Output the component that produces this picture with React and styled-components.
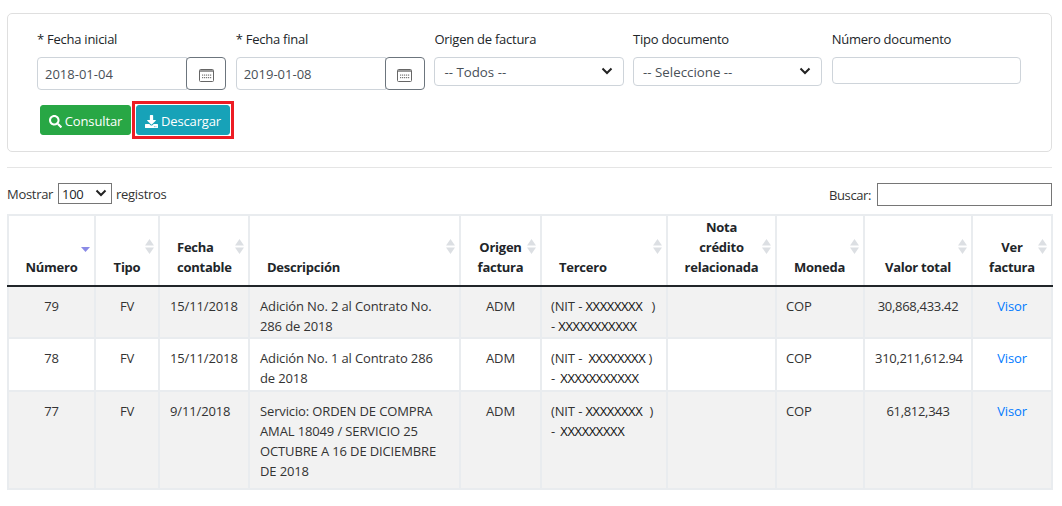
import React from "react";
import styled, { createGlobalStyle } from "styled-components";
import { FaSearch, FaDownload } from "react-icons/fa";

const Global = createGlobalStyle`
  html, body { margin: 0; background: #fff; }
  body { font-family: "Open Sans", "Noto Sans", sans-serif; font-size: 13px; line-height: 20px; color: #212529; letter-spacing: -0.13px; }
`;
const Page = styled.div`
  width: 1045px;
  padding: 13px 0 0 7px;
`;
const Card = styled.div`
  border: 1px solid #dfdfdf;
  border-radius: 5px;
  padding: 15px 0 12px 29px;
  height: 139px;
  box-sizing: border-box;
`;
const FilterGrid = styled.div`
  display: grid;
  grid-template-columns: repeat(5, 198.7px);
  height: 61px;
`;
const Field = styled.div`
  display: flex;
  flex-direction: column;
  align-items: flex-start;
`;
const Label = styled.label`
  height: 20px;
  margin-bottom: 8px;
  color: #212529;
  letter-spacing: -0.25px;
`;
const InputGroup = styled.div`
  display: flex;
`;
const DateInput = styled.input`
  width: 150px;
  height: 33px;
  box-sizing: border-box;
  border: 1px solid #ced4da;
  border-radius: 4px 0 0 4px;
  padding: 0 7px;
  font: inherit;
  color: #495057;
  outline: none;
`;
const CalButton = styled.button`
  width: 40px;
  height: 33px;
  box-sizing: border-box;
  margin-left: -1px;
  background: #fff;
  border: 1px solid #6c757d;
  border-radius: 4px;
  padding: 3px 0 0;
  display: flex;
  align-items: center;
  justify-content: center;
`;
const SelectWrap = styled.div`
  position: relative;
  width: ${p => p.$w}px;
  height: 29px;
`;
const Select = styled.select`
  appearance: none;
  width: 100%;
  height: 100%;
  box-sizing: border-box;
  border: 1px solid #ced4da;
  border-radius: 4px;
  background: #fff;
  padding: 0 9px;
  font: inherit;
  font-size: 13.3px;
  color: #495057;
  outline: none;
`;
const Chevron = styled.svg`
  position: absolute;
  right: 11px;
  top: 10px;
  width: 12px;
  height: 8px;
  pointer-events: none;
`;
const NumberInput = styled.input`
  width: 189px;
  height: 27px;
  box-sizing: border-box;
  border: 1px solid #ced4da;
  border-radius: 4px;
  outline: none;
`;
const Actions = styled.div`
  display: flex;
  align-items: center;
  margin-top: 11px;
  margin-left: 3px;
`;
const Btn = styled.button`
  width: ${p => p.$w}px;
  height: 30px;
  box-sizing: border-box;
  border: 1px solid ${p => p.$bg};
  background: ${p => p.$bg};
  color: #fff;
  border-radius: 3px;
  padding: 2px 0 0;
  font: inherit;
  letter-spacing: -0.13px;
  display: inline-flex;
  align-items: center;
  justify-content: center;
  gap: 3px;
  white-space: nowrap;
`;
const Highlight = styled.div`
  border: 3px solid #ed1c24;
  padding: 1px;
  margin-left: 1px;
  display: flex;
`;
const Rule = styled.hr`
  border: 0;
  border-top: 1px solid #e5e5e5;
  margin: 15px 0 0;
`;
const Controls = styled.div`
  display: flex;
  justify-content: space-between;
  align-items: flex-start;
  height: 31px;
  margin-top: 15px;
`;
const LengthBox = styled.div`
  display: flex;
  align-items: center;
  height: 21px;
  gap: 4px;
  color: #333;
  white-space: nowrap;
  letter-spacing: -0.3px;
`;
const LengthSelectWrap = styled.div`
  position: relative;
  width: 54px;
  height: 21px;
  margin-left: 1px;
`;
const LengthSelect = styled.select`
  appearance: none;
  width: 100%;
  height: 100%;
  box-sizing: border-box;
  border: 1px solid #767676;
  border-radius: 0;
  background: #fff;
  padding: 0 3px;
  font: inherit;
  letter-spacing: -0.3px;
  color: #212529;
`;
const LengthChevron = styled(Chevron)`
  right: 5px;
  top: 6px;
`;
const SearchBox = styled.div`
  display: flex;
  align-items: center;
  gap: 6px;
  color: #333;
  letter-spacing: -0.4px;
`;
const SearchInput = styled.input`
  width: 175px;
  height: 23px;
  box-sizing: border-box;
  border: 1px solid #767676;
  outline: none;
`;
const Table = styled.table`
  table-layout: fixed;
  width: 1044px;
  border-collapse: collapse;
  border: 2px solid #e9ecef;
`;
const Th = styled.th`
  position: relative;
  border: 2px solid #e9ecef;
  border-bottom: 2px solid #212529;
  padding: 0 12px 8px ${p => (p.$center ? "12px" : "17px")};
  height: 61px;
  vertical-align: bottom;
  text-align: ${p => (p.$center ? "center" : "left")};
  font-weight: 700;
  line-height: 20px;
  letter-spacing: -0.25px;
  color: #212529;
`;
const SortIcon = styled.svg`
  position: absolute;
  right: 4px;
  top: 23px;
  width: 9px;
  height: 15px;
`;
const Row = styled.tr`
  background: ${p => (p.$odd ? "#f2f2f2" : "#fff")};
`;
const Td = styled.td`
  border: 2px solid #e9ecef;
  padding: 9px 10px ${p => p.$pb}px ${p => p.$pl || 10}px;
  vertical-align: top;
  text-align: ${p => (p.$center ? "center" : "left")};
  line-height: 20px;
  color: #333;
  letter-spacing: ${p => p.$tight ? "-0.3px" : "inherit"};
`;
const NitLine = styled.div`
  white-space: nowrap;
`;
const Masked = styled.span`
  color: #111;
  letter-spacing: -0.4px;
  margin: ${p => p.$m || "0"};
`;
const Link = styled.a`
  color: #007bff;
  text-decoration: none;
`;

const CalendarIcon = () => (
  <svg width="15" height="13" viewBox="0 0 15 13">
    <rect x="0.5" y="0.5" width="14" height="12" rx="1" fill="#fff" stroke="#666" />
    <rect x="1" y="1" width="13" height="2" fill="#999" />
    {[3, 5, 7, 9, 11].map(x => (
      <g key={x} fill="#777">
        <rect x={x} y="5.5" width="1.2" height="1.2" />
        <rect x={x} y="8" width="1.2" height="1.2" />
      </g>
    ))}
  </svg>
);
const ChevronIcon = ({ as: C = Chevron }) => (
  <C viewBox="0 0 12 8">
    <path d="M1.5 1.5 L6 6 L10.5 1.5" fill="none" stroke="#222" strokeWidth="2" />
  </C>
);
const Sort = ({ active }) => (
  <SortIcon viewBox="0 0 9 15">
    {!active && <path d="M4.5 0 L9 6.5 H0 Z" fill="#dcdfe3" />}
    <path d={active ? "M0 8 H9 L4.5 13 Z" : "M0 8.5 H9 L4.5 15 Z"} fill={active ? "#8a8ae6" : "#dcdfe3"} />
  </SortIcon>
);

const headers = [
  { w: 87, t: <>Número</>, c: true, active: true },
  { w: 64, t: <>Tipo</>, c: true },
  { w: 90, t: <>Fecha<br />contable</> },
  { w: 211, t: <>Descripción</> },
  { w: 81, t: <>Origen<br />factura</>, c: true },
  { w: 126, t: <>Tercero</> },
  { w: 109, t: <>Nota<br />crédito<br />relacionada</>, c: true },
  { w: 88, t: <>Moneda</> },
  { w: 108, t: <>Valor total</>, c: true },
  { w: 80, t: <>Ver<br />factura</>, c: true },
];

const rows = [
  { n: "79", f: "15/11/2018", d: "Adición No. 2 al Contrato No. 286 de 2018", m1: "XXXXXXXX", g1: "0 6px 0 0", g2: "0", m2: "XXXXXXXXXXX", v: "30,868,433.42", pb: 1 },
  { n: "78", f: "15/11/2018", d: "Adición No. 1 al Contrato 286 de 2018", m1: "XXXXXXXX", g1: "0 0 0 3px", g2: "0 0 0 2px", m2: "XXXXXXXXXXX", v: "310,211,612.94", pb: 2 },
  { n: "77", f: "9/11/2018", d: "Servicio: ORDEN DE COMPRA AMAL 18049 / SERVICIO 25 OCTUBRE A 16 DE DICIEMBRE DE 2018", m1: "XXXXXXXX", g1: "0 4px 0 0", g2: "0 0 0 2px", m2: "XXXXXXXXX", v: "61,812,343", pb: 7 },
];

export default function App() {
  return (
    <Page>
      <Global />
      <Card>
        <FilterGrid>
          <Field>
            <Label>* Fecha inicial</Label>
            <InputGroup>
              <DateInput defaultValue="2018-01-04" />
              <CalButton><CalendarIcon /></CalButton>
            </InputGroup>
          </Field>
          <Field>
            <Label>* Fecha final</Label>
            <InputGroup>
              <DateInput defaultValue="2019-01-08" />
              <CalButton><CalendarIcon /></CalButton>
            </InputGroup>
          </Field>
          <Field>
            <Label>Origen de factura</Label>
            <SelectWrap $w={190}>
              <Select><option>-- Todos --</option></Select>
              <ChevronIcon />
            </SelectWrap>
          </Field>
          <Field>
            <Label>Tipo documento</Label>
            <SelectWrap $w={189}>
              <Select><option>-- Seleccione --</option></Select>
              <ChevronIcon />
            </SelectWrap>
          </Field>
          <Field>
            <Label>Número documento</Label>
            <NumberInput />
          </Field>
        </FilterGrid>
        <Actions>
          <Btn $bg="#28a745" $w={91}><FaSearch size={13} /> Consultar</Btn>
          <Highlight>
            <Btn $bg="#17a2b8" $w={94}><FaDownload size={13} /> Descargar</Btn>
          </Highlight>
        </Actions>
      </Card>
      <Rule />
      <Controls>
        <LengthBox>
          Mostrar
          <LengthSelectWrap>
            <LengthSelect><option>100</option></LengthSelect>
            <ChevronIcon as={LengthChevron} />
          </LengthSelectWrap>
          registros
        </LengthBox>
        <SearchBox>
          Buscar:
          <SearchInput />
        </SearchBox>
      </Controls>
      <Table>
        <colgroup>
          {headers.map((h, i) => <col key={i} style={{ width: h.w }} />)}
        </colgroup>
        <thead>
          <tr>
            {headers.map((h, i) => (
              <Th key={i} $center={h.c}>
                {h.t}
                <Sort active={h.active} />
              </Th>
            ))}
          </tr>
        </thead>
        <tbody>
          {rows.map((r, i) => (
            <Row key={r.n} $odd={i % 2 === 0}>
              <Td $pb={r.pb} $center>{r.n}</Td>
              <Td $pb={r.pb} $center>FV</Td>
              <Td $pb={r.pb}>{r.f}</Td>
              <Td $pb={r.pb}>{r.d}</Td>
              <Td $pb={r.pb} $center>ADM</Td>
              <Td $pb={r.pb} $pl={9}>
                <NitLine>(NIT - <Masked $m={r.g1}>{r.m1}</Masked> )</NitLine>
                <NitLine>- <Masked $m={r.g2}>{r.m2}</Masked></NitLine>
              </Td>
              <Td $pb={r.pb} />
              <Td $pb={r.pb} $pl={9}>COP</Td>
              <Td $pb={r.pb} $center $tight>{r.v}</Td>
              <Td $pb={r.pb} $center><Link href="#">Visor</Link></Td>
            </Row>
          ))}
        </tbody>
      </Table>
    </Page>
  );
}
